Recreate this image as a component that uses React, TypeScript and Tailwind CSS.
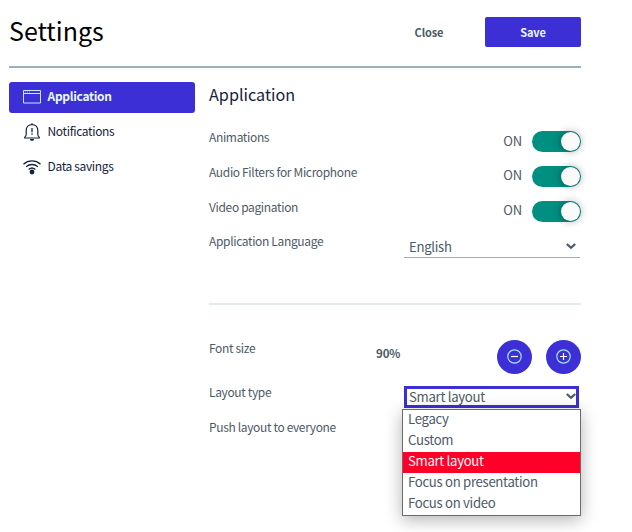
import React from 'react';

const Toggle = () => (
  <div className="flex h-[21px] w-[49px] items-center justify-end rounded-full bg-[#008f81] pr-px">
    <div className="h-[19px] w-[19px] rounded-full bg-[#fafafa] shadow-[0_0_9px_rgba(0,0,0,0.38)]" />
  </div>
);

const ToggleRow = ({ label, first = false }: { label: string; first?: boolean }) => (
  <div className="flex h-[35px] items-start justify-between">
    <span className="text-[12px] leading-[16px] tracking-[-0.35px]">{label}</span>
    <div className="flex items-start gap-[10px] pt-[2px]">
      <span className={first ? 'text-[13px] leading-[20px] tracking-[-0.2px]' : 'text-[13px] leading-[18px] tracking-[-0.2px]'}>ON</span>
      <Toggle />
    </div>
  </div>
);

const Chevron = () => (
  <svg width="10" height="7" viewBox="0 0 10 7" fill="none" stroke="#4e5a66" strokeWidth="2.3">
    <path d="M.8 1 5 4.8l4.2-3.8" />
  </svg>
);

const AppIcon = () => (
  <svg width="18" height="14" viewBox="0 0 18 14" fill="none" stroke="#c4eaff" strokeWidth="1">
    <path d="M.5.5h17v12.5H.5zM.5 3.5h17" />
    <path d="M2 2h1M4 2h1M6 2h1" strokeWidth=".6" />
  </svg>
);

const BellIcon = () => (
  <svg width="18" height="18" viewBox="0 0 18 18" fill="none" stroke="#14233a" strokeWidth="1.2">
    <path d="M9 .2v1.5M1.7 15h14.6v-.7c-1.2-.6-1.5-1.5-1.5-3V7.6C14.8 4 12.3 1.7 9 1.7S3.2 4 3.2 7.6v3.7c0 1.5-.3 2.4-1.5 3z" />
    <path d="M9 5v4.2M9 10.2v1.6" strokeWidth="1.3" />
    <path d="M7 16h4a2 2 0 0 1-4 0z" fill="#14233a" stroke="none" />
  </svg>
);

const WifiIcon = () => (
  <svg width="18" height="15" viewBox="0 0 18 15" fill="none" stroke="#14233a" strokeWidth="1.4">
    <path d="M.5 4.2C5.3-.2 12.7-.2 17.5 4.2M3.2 6.8c3.3-3 8.3-3 11.6 0M5.7 9.4c1.9-1.7 4.7-1.7 6.6 0" />
    <circle cx="9" cy="12" r="2.4" fill="#14233a" stroke="none" />
  </svg>
);

const RoundButton = ({ plus = false }: { plus?: boolean }) => (
  <button className="flex h-[34px] w-[35px] items-center justify-center rounded-[50%] bg-[#3c2fd6] pb-px">
    <svg width="15" height="15" viewBox="0 0 15 15" fill="none" stroke="#a5e4ff" strokeWidth="1.2">
      <circle cx="7.5" cy="7.5" r="6.7" />
      <path d={plus ? 'M4 7.5h7M7.5 4v7' : 'M4 7.5h7'} stroke="#ffffff" strokeWidth="1.2" />
    </svg>
  </button>
);

const options = ['Legacy', 'Custom', 'Smart layout', 'Focus on presentation', 'Focus on video'];

export default function App() {
  return (
    <div className="h-[532px] w-[632px] overflow-hidden bg-white pl-[9px] font-['Noto_Sans_CJK_SC',sans-serif] text-[#4e5a66]">
      <div className="w-[572px]">
        <header className="flex h-[68px] items-start justify-between border-b-2 border-[#9bb0b9]">
          <h1 className="pt-[11px] text-[25px] leading-[38px] text-black">Settings</h1>
          <div className="flex pt-[17px]">
            <button className="h-[30px] w-[112px] text-[11px] leading-[28px] font-bold tracking-[-0.1px]">Close</button>
            <button className="h-[30px] w-[96px] rounded-[2px] bg-[#3c2fd6] text-[11px] leading-[28px] font-bold tracking-[-0.1px] text-[#e8faff]">Save</button>
          </div>
        </header>
        <div className="flex gap-[14px] pt-[14px]">
          <nav className="flex w-[186px] flex-col gap-[4px] text-[12px] text-[#14233a]">
            <div className="flex h-[31px] items-center gap-[6.5px] rounded-[3px] bg-[#3c2fd6] pb-px pl-[14px] font-bold tracking-[-0.3px] text-[#e8faff]"><AppIcon /><span className="pb-[2px] leading-[18px]">Application</span></div>
            <div className="flex h-[31px] items-center gap-[6.5px] pb-px pl-[14px]"><BellIcon /><span className="pb-[2px] leading-[18px] tracking-[-0.35px]">Notifications</span></div>
            <div className="flex h-[31px] items-center gap-[6.5px] pb-px pl-[14px]"><WifiIcon /><span className="pb-[2px] leading-[18px] tracking-[-0.35px]">Data savings</span></div>
          </nav>
          <main className="w-[372px]">
            <h2 className="h-[47px] text-[16.2px] leading-[24px] text-[#14233a]">Application</h2>
            <ToggleRow label="Animations" first />
            <ToggleRow label="Audio Filters for Microphone" />
            <ToggleRow label="Video pagination" />
            <div className="flex h-[71px] items-start justify-between border-b-2 border-[#e4e9ec] pr-px">
              <span className="text-[12px] leading-[14px] tracking-[-0.35px]">Application Language</span>
              <div className="mt-[3px] flex h-[21px] w-[176px] items-center justify-between border-b border-[#9bb0b9] pr-[4px] pl-[5px]">
                <span className="text-[13.2px] leading-[20px] tracking-[-0.3px]">English</span>
                <div className="pb-px"><Chevron /></div>
              </div>
            </div>
            <div className="flex h-[81px] items-start pt-[35px]">
              <span className="w-[167px] text-[12px] leading-[16px] tracking-[-0.35px]">Font size</span>
              <span className="w-[121px] pt-[4px] text-[11.5px] leading-[18px] font-bold tracking-[-0.1px]">90%</span>
              <div className="flex gap-[14px]"><RoundButton /><RoundButton plus /></div>
            </div>
            <div className="flex h-[35px] items-start justify-between pr-[2px]">
              <span className="text-[12px] leading-[12px] tracking-[-0.35px]">Layout type</span>
              <div className="relative h-[22px] w-[175px] border-[3px] border-[#3c2fd6]">
                <div className="flex h-[16px] items-center justify-between pl-[2px]">
                  <span className="text-[13.2px] leading-[16px] tracking-[-0.3px]">Smart layout</span>
                  <div className="pb-[2px]"><Chevron /></div>
                </div>
                <div className="absolute top-[20px] left-[-5px] h-[107px] w-[179px] border border-[#6b6b6b] bg-white shadow-[0_4px_16px_rgba(0,0,0,0.3)]">
                  {options.map((option) => (
                    <div key={option} className={option === 'Smart layout' ? 'h-[21px] bg-[#ff0028] pl-[5px] text-[13.2px] leading-[18px] tracking-[-0.32px] text-white' : 'h-[21px] pl-[5px] text-[13.2px] leading-[18px] tracking-[-0.32px]'}>{option}</div>
                  ))}
                </div>
              </div>
            </div>
            <div className="text-[12px] leading-[12px] tracking-[-0.35px]">Push layout to everyone</div>
          </main>
        </div>
      </div>
    </div>
  );
}
